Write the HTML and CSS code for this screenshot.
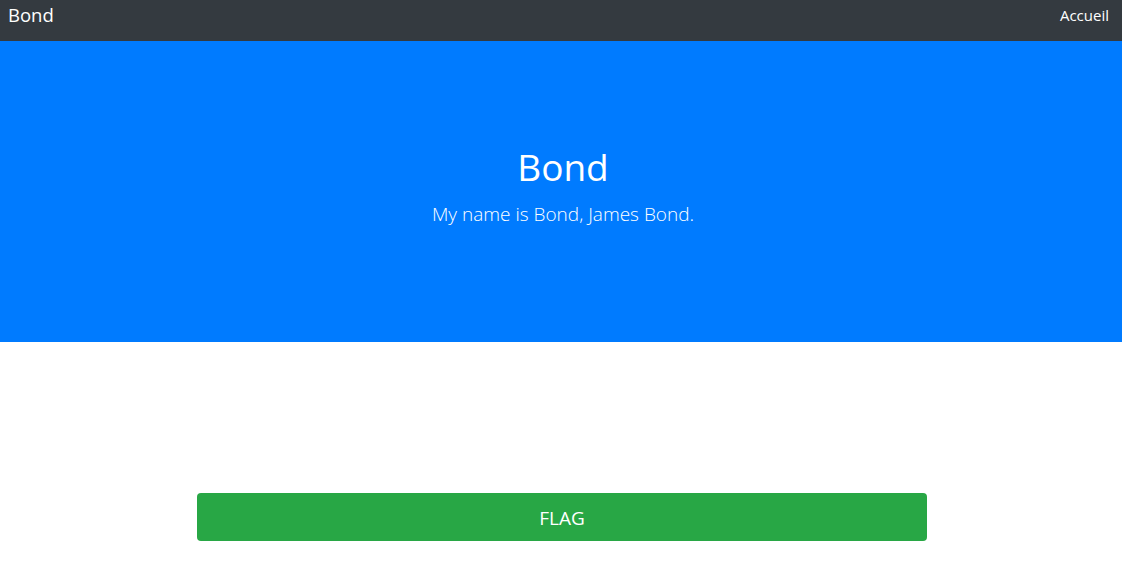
FILE: index.html
```html
<!DOCTYPE html>
<html lang="fr">
<head>
<meta charset="utf-8">
<title>Bond</title>
<link rel="stylesheet" href="styles.css">
</head>
<body>
<nav class="navbar">
  <a class="brand" href="#">Bond</a>
  <a class="nav-link" href="#">Accueil</a>
</nav>
<header class="hero">
  <h1 class="hero-title">Bond</h1>
  <p class="lead">My name is Bond, James Bond.</p>
</header>
<main class="content">
  <button class="btn-flag" type="button">FLAG</button>
</main>
</body>
</html>
```
FILE: styles.css
```css
* { box-sizing: border-box; }
html, body { margin: 0; padding: 0; }
body {
  font-family: "Segoe UI", "Open Sans", "Noto Sans", sans-serif;
  color: #212529;
  background: #fff;
}
.navbar {
  height: 41px;
  background: #343a40;
  display: flex;
  align-items: center;
  justify-content: space-between;
  padding: 0 13px 0 8px;
}
.brand {
  color: #fff;
  text-decoration: none;
  font-size: 18.5px;
  line-height: 1;
  margin-top: -11px;
}
.nav-link {
  color: #fff;
  text-decoration: none;
  font-size: 15px;
  margin-top: -12px;
}
.hero {
  height: 301px;
  background: #007bff;
  color: #fff;
  display: flex;
  flex-direction: column;
  align-items: center;
  padding: 104px 0 0 4px;
}
.hero-title {
  margin: 0;
  font-size: 37px;
  font-weight: 400;
  line-height: 1.2;
}
.lead {
  margin: 11px 0 0;
  font-size: 19px;
  font-weight: 300;
  line-height: 1.5;
}
.content {
  display: flex;
  justify-content: center;
  padding: 151px 0 0 2px;
}
.btn-flag {
  width: 730px;
  height: 48px;
  border: none;
  border-radius: 4px;
  background: #28a745;
  color: #fff;
  font-family: inherit;
  font-size: 19px;
  padding-top: 2px;
  cursor: pointer;
}
```
